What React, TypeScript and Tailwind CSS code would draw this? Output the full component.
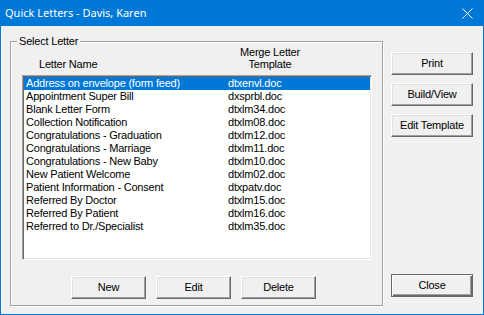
import React from "react";

const LETTERS: [string, string][] = [
  ["Address on envelope (form feed)", "dtxenvl.doc"],
  ["Appointment Super Bill", "dxsprbl.doc"],
  ["Blank Letter Form", "dtxlm34.doc"],
  ["Collection Notification", "dtxlm08.doc"],
  ["Congratulations - Graduation", "dtxlm12.doc"],
  ["Congratulations - Marriage", "dtxlm11.doc"],
  ["Congratulations - New Baby", "dtxlm10.doc"],
  ["New Patient Welcome", "dtxlm02.doc"],
  ["Patient Information - Consent", "dtxpatv.doc"],
  ["Referred By Doctor", "dtxlm15.doc"],
  ["Referred By Patient", "dtxlm16.doc"],
  ["Referred to Dr./Specialist", "dtxlm35.doc"],
];

function Btn({ label, wide, isDefault }: { label: string; wide?: boolean; isDefault?: boolean }) {
  const size = wide ? "w-[82px]" : "w-[75px]";
  if (isDefault) {
    return (
      <div
        className={`${size} flex h-[23px] items-center justify-center border border-[#696969] bg-[#f0f0f0] text-[11px] text-black shadow-[inset_1px_1px_0_#fff,inset_-1px_-1px_0_#696969,inset_-2px_-2px_0_#a0a0a0]`}
      >
        {label}
      </div>
    );
  }
  return (
    <div
      className={`${size} flex h-[23px] items-center justify-center border border-t-white border-l-white border-r-[#696969] border-b-[#696969] bg-[#f0f0f0] text-[11px] text-black shadow-[inset_-1px_-1px_0_#a0a0a0,inset_1px_1px_0_#e3e3e3]`}
    >
      {label}
    </div>
  );
}

export default function App() {
  return (
    <div
      className="flex h-[315px] w-[484px] flex-col border border-[#0078d7] bg-[#f0f0f0] tracking-[-0.2px]"
      style={{ fontFamily: '"Liberation Sans", Arial, sans-serif' }}
    >
      {/* title bar */}
      <div className="flex h-[25px] shrink-0 items-center justify-between bg-[#0078d7] pl-[4px] pr-[10px] text-white">
        <span className="text-[11px] tracking-normal" style={{ fontFamily: '"Noto Sans", "Open Sans", sans-serif' }}>
          Quick Letters - Davis, Karen
        </span>
        <svg width="11" height="11" viewBox="0 0 11 11">
          <path d="M0.5 0.5 L10.5 10.5 M10.5 0.5 L0.5 10.5" stroke="#fff" strokeWidth="1" />
        </svg>
      </div>

      <div className="flex flex-1 pl-[9px]">
        {/* Select Letter group */}
        <div className="relative mt-[15px] flex h-[265px] w-[373px] flex-col border border-[#a0a0a0] pl-[11px] shadow-[inset_1px_1px_0_#fff,1px_1px_0_#fff]">
          <span className="absolute -top-[7px] left-[6px] bg-[#f0f0f0] px-[2px] text-[11px] leading-[13px] text-black">
            Select Letter
          </span>

          <div className="flex h-[33px] items-end pb-[5px] text-[11px] leading-[12px] text-black">
            <div className="w-[208px] pl-[17px]">Letter Name</div>
            <div className="w-[80px] text-center">
              Merge Letter
              <br />
              Template
            </div>
          </div>

          <div className="h-[185px] w-[350px] border border-t-[#a0a0a0] border-l-[#a0a0a0] border-r-white border-b-white bg-white p-px shadow-[inset_1px_1px_0_#696969,inset_-1px_-1px_0_#e3e3e3]">
            {LETTERS.map(([name, file], i) => (
              <div
                key={name}
                className={`flex h-[13px] items-center text-[11px] leading-[13px] ${
                  i === 0 ? "bg-[#0078d7] text-white" : "text-black"
                }`}
              >
                <span className="w-[204px] pl-[2px]">{name}</span>
                <span>{file}</span>
              </div>
            ))}
          </div>

          <div className="mt-[16px] flex gap-[10px] pl-[49px]">
            <Btn label="New" />
            <Btn label="Edit" />
            <Btn label="Delete" />
          </div>
        </div>

        {/* right-hand buttons */}
        <div className="ml-[8px] flex w-[82px] flex-col gap-[8px] pb-[17px] pt-[26px]">
          <Btn label="Print" wide />
          <Btn label="Build/View" wide />
          <Btn label="Edit Template" wide />
          <div className="mt-auto">
            <Btn label="Close" wide isDefault />
          </div>
        </div>
      </div>
    </div>
  );
}
